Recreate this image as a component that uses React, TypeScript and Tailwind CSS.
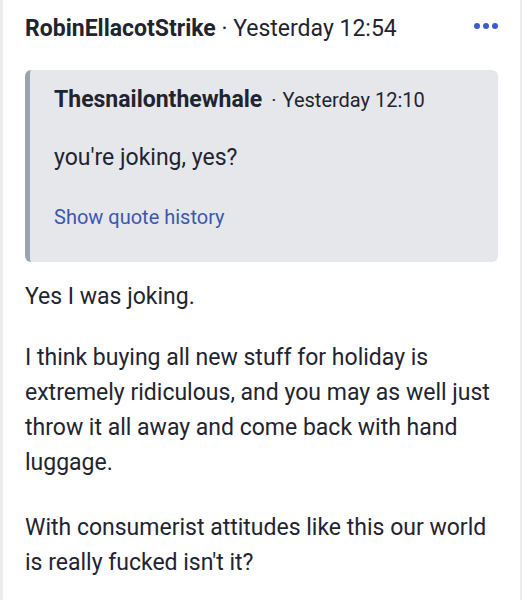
import React from "react";

export default function App() {
  return (
    <div
      className="w-[524px] h-[600px] bg-white flex"
      style={{ fontFamily: "Roboto, 'Noto Sans', sans-serif" }}
    >
      <div className="w-[522px] h-full border-l-[3px] border-r-[2px] border-[#ececee] pl-[22px] pr-[20px]">
        <div className="flex items-center justify-between pt-[15px] h-[43px]">
          <div className="text-[23px] leading-[28px] text-[#1f2430] whitespace-nowrap">
            <span className="font-bold">RobinEllacotStrike</span>
            <span> · Yesterday 12:54</span>
          </div>
          <div className="flex gap-[3px] mr-[2px] -mt-[6px]">
            <span className="w-[6px] h-[6px] rounded-full bg-[#3b5ccc]" />
            <span className="w-[6px] h-[6px] rounded-full bg-[#3b5ccc]" />
            <span className="w-[6px] h-[6px] rounded-full bg-[#3b5ccc]" />
          </div>
        </div>
        <div className="mt-[27px] w-[473px] bg-[#e5e7eb] rounded-[6px] border-l-[5px] border-[#9ca3af] pl-[24px] pt-[16px] pb-[31px] text-[#1f2430]">
          <div className="h-[28px] flex items-baseline whitespace-pre">
            <span className="font-bold text-[23px] leading-[28px]">Thesnailonthewhale</span>
            <span className="text-[20px] leading-[28px] ml-[9px]">·</span>
            <span className="text-[20px] leading-[28px] ml-[6px]">Yesterday 12:10</span>
          </div>
          <div className="mt-[30px] text-[23px] leading-[28px]">you're joking, yes?</div>
          <div className="mt-[31px] text-[20px] leading-[28px] text-[#3a58ad]">Show quote history</div>
        </div>
        <div className="text-[23px] leading-[35px] text-[#1f2430]">
          <p className="mt-[17px]">Yes I was joking.</p>
          <p className="mt-[26px]">
            I think buying all new stuff for holiday is extremely ridiculous, and you may as well just throw it all away and come back with hand luggage.
          </p>
          <p className="mt-[30px]">With consumerist attitudes like this our world is really fucked isn't it?</p>
        </div>
      </div>
    </div>
  );
}
